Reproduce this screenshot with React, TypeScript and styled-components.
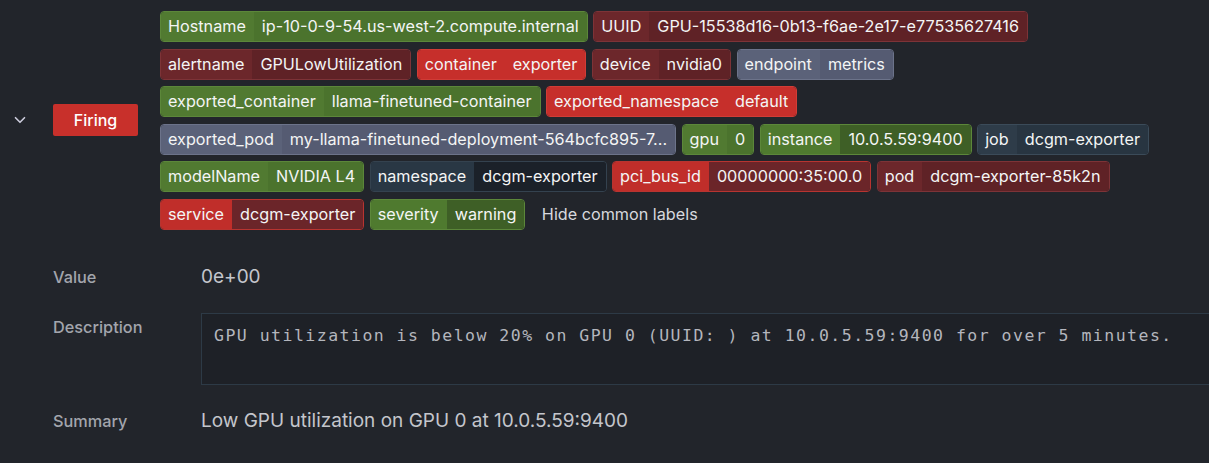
import styled, { createGlobalStyle } from "styled-components";
import { ChevronDown } from "lucide-react";

const GlobalStyle = createGlobalStyle`
  body {
    margin: 0;
    background-color: #22252b;
    font-family: Inter, "Noto Sans", sans-serif;
    overflow: hidden;
  }
`;

type Tone = "green" | "greenDeep" | "red" | "redSplit" | "maroon" | "slate" | "navy" | "navyDeep";

const tones: Record<Tone, { key: string; value: string; border: string }> = {
  green: { key: "#517a31", value: "#4b732d", border: "#5c873a" },
  greenDeep: { key: "#4f7a2f", value: "#3e5f26", border: "#5c873a" },
  red: { key: "#c62f2b", value: "#c62f2b", border: "#d13c36" },
  redSplit: { key: "#c02e2a", value: "#6b2529", border: "#b83430" },
  maroon: { key: "#6c272b", value: "#5f2226", border: "#7d3337" },
  slate: { key: "#5b6279", value: "#555b72", border: "#6c738a" },
  navy: { key: "#2e3c49", value: "#283541", border: "#3b4b59" },
  navyDeep: { key: "#293744", value: "#1b2129", border: "#34424f" },
};

const Page = styled.div`
  padding-top: 11px;
  color: #ccccdc;
`;

const AlertRow = styled.div`
  display: flex;
  align-items: center;
`;

const Toggle = styled.button`
  display: flex;
  align-items: center;
  justify-content: flex-start;
  width: 53px;
  padding: 0 0 0 11px;
  border: none;
  background: none;
  color: #ccccdc;
`;

const StateCell = styled.div`
  width: 107px;
  flex-shrink: 0;
`;

const StateBadge = styled.span`
  display: inline-flex;
  align-items: center;
  justify-content: center;
  width: 85px;
  height: 32px;
  border-radius: 2px;
  background-color: #c8302b;
  color: #ffffff;
  font-size: 16px;
  font-weight: 500;
`;

const LabelList = styled.div`
  flex: 1;
  display: flex;
  flex-wrap: wrap;
  align-items: center;
  column-gap: 5.5px;
  row-gap: 6.5px;
`;

const Label = styled.span<{ $tone: Tone }>`
  display: inline-flex;
  height: 31px;
  box-sizing: border-box;
  border: 1px solid ${(p) => tones[p.$tone].border};
  border-radius: 4px;
  overflow: hidden;
  font-size: 16.2px;
  line-height: 29px;
  color: #f4f5f5;
  white-space: nowrap;
`;

const LabelKey = styled.span<{ $tone: Tone }>`
  padding: 0 8px 0 7px;
  background-color: ${(p) => tones[p.$tone].key};
`;

const LabelValue = styled.span<{ $tone: Tone }>`
  padding: 0 8px;
  background-color: ${(p) => tones[p.$tone].value};
`;

const HideButton = styled.button`
  border: none;
  background: none;
  padding: 0 0 0 11px;
  font-family: inherit;
  font-size: 16.2px;
  color: #d8d9de;
`;

const Details = styled.div`
  display: grid;
  grid-template-columns: 148px 1fr;
  row-gap: 26px;
  margin-top: 37px;
  padding-left: 53px;
  margin-right: -30px;
`;

const FieldName = styled.div<{ $top?: number }>`
  font-size: 16.3px;
  font-weight: 500;
  color: #a3a5ad;
  line-height: 20px;
  padding-top: ${(p) => p.$top ?? 0}px;
`;

const FieldValue = styled.div`
  font-size: 19px;
  color: #c4c6cc;
  line-height: 20px;
`;

const DescriptionBox = styled.div`
  height: 72px;
  box-sizing: border-box;
  border: 1px solid #2d3a46;
  background-color: #1e2127;
  padding: 12px 12px;
  font-family: "DejaVu Sans Mono", "Liberation Mono", monospace;
  font-size: 16.5px;
  letter-spacing: 1.48px;
  color: #b4b6bd;
`;

const labels: { k: string; v: string; tone: Tone }[] = [
  { k: "Hostname", v: "ip-10-0-9-54.us-west-2.compute.internal", tone: "green" },
  { k: "UUID", v: "GPU-15538d16-0b13-f6ae-2e17-e77535627416", tone: "maroon" },
  { k: "alertname", v: "GPULowUtilization", tone: "maroon" },
  { k: "container", v: "exporter", tone: "red" },
  { k: "device", v: "nvidia0", tone: "maroon" },
  { k: "endpoint", v: "metrics", tone: "slate" },
  { k: "exported_container", v: "llama-finetuned-container", tone: "green" },
  { k: "exported_namespace", v: "default", tone: "red" },
  { k: "exported_pod", v: "my-llama-finetuned-deployment-564bcfc895-7...", tone: "slate" },
  { k: "gpu", v: "0", tone: "green" },
  { k: "instance", v: "10.0.5.59:9400", tone: "greenDeep" },
  { k: "job", v: "dcgm-exporter", tone: "navy" },
  { k: "modelName", v: "NVIDIA L4", tone: "green" },
  { k: "namespace", v: "dcgm-exporter", tone: "navyDeep" },
  { k: "pci_bus_id", v: "00000000:35:00.0", tone: "redSplit" },
  { k: "pod", v: "dcgm-exporter-85k2n", tone: "maroon" },
  { k: "service", v: "dcgm-exporter", tone: "redSplit" },
  { k: "severity", v: "warning", tone: "greenDeep" },
];

export default function App() {
  return (
    <Page>
      <GlobalStyle />
      <AlertRow>
        <Toggle aria-label="Collapse">
          <ChevronDown size={18} strokeWidth={2.2} />
        </Toggle>
        <StateCell>
          <StateBadge>Firing</StateBadge>
        </StateCell>
        <LabelList>
          {labels.map((l) => (
            <Label key={l.k} $tone={l.tone}>
              <LabelKey $tone={l.tone}>{l.k}</LabelKey>
              <LabelValue $tone={l.tone}>{l.v}</LabelValue>
            </Label>
          ))}
          <HideButton>Hide common labels</HideButton>
        </LabelList>
      </AlertRow>
      <Details>
        <FieldName>Value</FieldName>
        <FieldValue>0e+00</FieldValue>
        <FieldName $top={4}>Description</FieldName>
        <DescriptionBox>
          GPU utilization is below 20% on GPU 0 (UUID: ) at 10.0.5.59:9400 for over 5 minutes.
        </DescriptionBox>
        <FieldName>Summary</FieldName>
        <FieldValue>Low GPU utilization on GPU 0 at 10.0.5.59:9400</FieldValue>
      </Details>
    </Page>
  );
}
